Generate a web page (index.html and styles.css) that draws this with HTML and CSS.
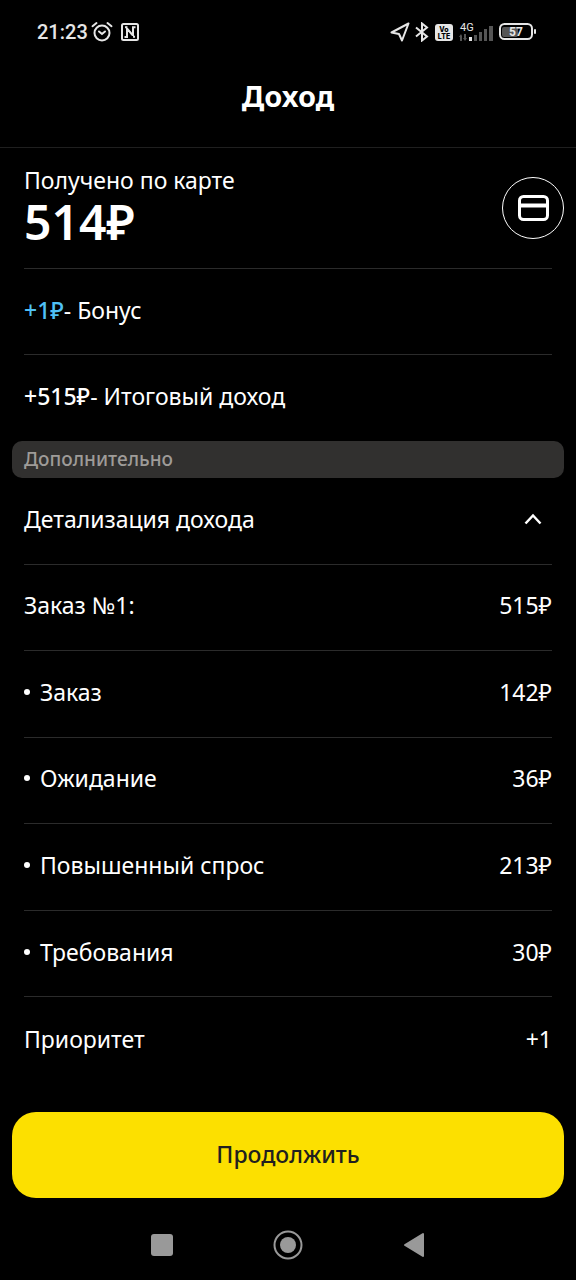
FILE: index.html
```html
<!DOCTYPE html>
<html lang="ru">
<head>
<meta charset="utf-8">
<meta name="viewport" content="width=device-width, initial-scale=1">
<title>Доход</title>
<link rel="stylesheet" href="styles.css">
</head>
<body>
<div class="screen">
  <div class="status">
    <div class="status-group">
      <time class="clock">21:23</time>
      <svg width="22" height="22" viewBox="0 0 22 22" fill="none" stroke="#e6e6e6" stroke-width="2" stroke-linecap="round"><circle cx="11" cy="12" r="7.500"/><path d="M1.500 5.200 5.500 2M20.500 5.200 16.500 2M8 10.500l3 2.500 3-2.500"/></svg>
      <svg class="nfc" width="20" height="20" viewBox="0 0 20 20" fill="none" stroke="#e6e6e6" stroke-width="2"><rect x="2" y="2" width="16" height="16" rx="1.500"/><path d="M4.500 15H7V6.500l5.500 6.500M5 5.300h2.500M15.500 5.300H13V14M15 14.700h-2"/></svg>
    </div>
    <div class="status-group status-right">
      <svg width="20" height="20" viewBox="0 0 20 20" fill="none" stroke="#e6e6e6" stroke-width="2" stroke-linejoin="round"><path d="M18.500 1.500 1.500 10.500l7.500 1.500 3 6.500z"/></svg>
      <svg width="14" height="20" viewBox="0 0 14 20" fill="none" stroke="#e6e6e6" stroke-width="2"><path d="M1 5.500 12 14.500 7 18.500V1.500l5 4L1 14.500"/></svg>
      <svg width="19" height="17" viewBox="0 0 19 17"><rect x="1" width="18" height="17" rx="3" fill="#e6e6e6"/><text class="volte-text" x="10" y="8" text-anchor="middle">Vo</text><text class="volte-text" x="10" y="15" text-anchor="middle">LTE</text></svg>
      <svg width="36" height="20" viewBox="0 0 36 20"><text class="net-text" x="2" y="9">4G</text><g fill="#555"><path d="M1 15l2-3 1 2v5H2v-4zM5 16h1v-4h2v4h1l-2 3z"/><rect x="16" y="13" width="3" height="6"/><rect x="21" y="10" width="3" height="9"/><rect x="26" y="7" width="3" height="12"/><rect x="31" y="4" width="4" height="15"/></g><rect x="11" y="15" width="3" height="4" fill="#e6e6e6"/></svg>
      <svg width="38" height="18" viewBox="0 0 38 18"><rect x="3" y="4" width="16" height="10" rx="2" fill="#555"/><rect x="1" y="1" width="32" height="15" rx="4.500" fill="none" stroke="#e6e6e6" stroke-width="2"/><rect x="35" y="6" width="2" height="5" rx="1" fill="#e6e6e6"/><text class="battery-text" x="17" y="13" text-anchor="middle">57</text></svg>
    </div>
  </div>

  <header class="header"><h1 class="title">Доход</h1></header>

  <main class="content">
    <section>
      <div class="received">
        <div>
          <p class="received-label">Получено по карте</p>
          <p class="received-sum">514₽</p>
        </div>
        <button class="card-button" type="button" aria-label="Карта">
          <svg width="32" height="26" viewBox="0 0 32 26"><rect x="2.500" y="1.500" width="28" height="23" rx="4" fill="none" stroke="#fff" stroke-width="3"/><path d="M2 10.500h29" stroke="#fff" stroke-width="4"/></svg>
        </button>
      </div>
      <p class="row line"><span><span class="bonus">+1₽</span>- Бонус</span></p>
      <p class="row"><span><span class="total">+515₽</span>- Итоговый доход</span></p>
    </section>

    <h2 class="extra">Дополнительно</h2>

    <section class="details">
      <button class="row line toggle" type="button" aria-expanded="true">
        <span>Детализация дохода</span>
        <svg class="chevron" width="18" height="12" viewBox="0 0 18 12" fill="none" stroke="#fff" stroke-width="2.500"><path d="M1.500 10.500 9 2.500l7.500 8"/></svg>
      </button>
      <div class="row line"><span>Заказ №1:</span><span>515₽</span></div>
      <div class="row line"><span class="item">Заказ</span><span>142₽</span></div>
      <div class="row line"><span class="item">Ожидание</span><span>36₽</span></div>
      <div class="row line"><span class="item">Повышенный спрос</span><span>213₽</span></div>
      <div class="row line"><span class="item">Требования</span><span>30₽</span></div>
      <div class="row"><span>Приоритет</span><span>+1</span></div>
    </section>
  </main>

  <button class="continue" type="button">Продолжить</button>

  <nav class="nav">
    <button class="nav-button" type="button" aria-label="Недавние"><svg width="22" height="22" viewBox="0 0 22 22"><rect width="22" height="22" rx="3" fill="#999"/></svg></button>
    <button class="nav-button" type="button" aria-label="Домой"><svg width="30" height="30" viewBox="0 0 30 30"><circle cx="15" cy="15" r="13.500" fill="none" stroke="#999" stroke-width="2"/><circle cx="15" cy="15" r="8" fill="#999"/></svg></button>
    <button class="nav-button" type="button" aria-label="Назад"><svg width="22" height="26" viewBox="0 0 22 26"><path d="M20 2v22L2 13z" fill="#999" stroke="#999" stroke-width="2" stroke-linejoin="round"/></svg></button>
  </nav>
</div>
</body>
</html>
```
FILE: styles.css
```css
* {
  box-sizing: border-box;
}

body,
h1,
h2,
p {
  margin: 0;
}

body {
  background: #000;
  color: #fff;
  font: 23px/32px "Noto Sans", "Open Sans", sans-serif;
}

button {
  padding: 0;
  border: 0;
  background: none;
  color: inherit;
  font: inherit;
}

svg {
  display: block;
  flex: none;
}

.screen {
  display: flex;
  flex-direction: column;
  min-height: 100vh;
}

.status {
  display: flex;
  justify-content: space-between;
  align-items: center;
  height: 64px;
  padding: 0 39px 0 37px;
}

.status-group {
  display: flex;
  align-items: center;
  gap: 3px;
}

.status-right {
  gap: 5px;
}

.clock {
  color: #e6e6e6;
  font: 500 20px/24px Roboto, sans-serif;
}

.nfc {
  margin-left: 4px;
}

.volte-text {
  font: 800 7px Inter, sans-serif;
}

.net-text {
  fill: #e6e6e6;
  font: 11px Roboto, sans-serif;
}

.battery-text {
  fill: #e6e6e6;
  font: 700 12px Roboto, sans-serif;
}

.header {
  display: flex;
  justify-content: center;
  height: 84px;
  padding-top: 12px;
  border-bottom: 1px solid #1f1f1f;
}

.title {
  font-size: 29px;
  font-weight: 700;
  line-height: 40px;
}

.content {
  flex: 1;
  display: flex;
  flex-direction: column;
  padding: 0 12px;
}

.received {
  display: flex;
  justify-content: space-between;
  height: 121px;
  margin-left: 12px;
  padding-top: 16px;
  position: relative;
}

.received::after {
  content: "";
  position: absolute;
  right: 12px;
  bottom: 0;
  left: 0;
  border-bottom: 1px solid #2b2b2b;
}

.received-sum {
  font-size: 48px;
  font-weight: 600;
  line-height: 52px;
}

.card-button {
  display: grid;
  place-items: center;
  width: 62px;
  height: 62px;
  margin-top: 13px;
  border: 1px solid #fff;
  border-radius: 50%;
}

.row {
  display: flex;
  justify-content: space-between;
  align-items: center;
  min-height: 86px;
  margin: 0 12px;
  padding-bottom: 4px;
}

.line {
  border-bottom: 1px solid #2b2b2b;
}

.bonus,
.total {
  font-weight: 500;
}

.bonus {
  color: #4fc0f5;
}

.extra {
  padding: 0 12px;
  border-radius: 10px;
  background: #31302f;
  color: #9e9b98;
  font-size: 19px;
  font-weight: 500;
  line-height: 37px;
}

.details {
  flex: 1;
  display: grid;
  grid-auto-rows: 1fr;
}

.toggle {
  text-align: left;
}

.chevron {
  margin-right: 10px;
}

.item {
  display: flex;
  align-items: center;
  gap: 10px;
}

.item::before {
  content: "";
  width: 6px;
  height: 6px;
  border-radius: 50%;
  background: #fff;
}

.continue {
  height: 86px;
  margin: 28px 12px 0;
  padding-bottom: 2px;
  border-radius: 24px;
  background: #fce000;
  color: #21201f;
  font-weight: 500;
}

.nav {
  display: flex;
  justify-content: center;
  align-items: center;
  gap: 80px;
  height: 82px;
  padding-top: 12px;
}

.nav-button {
  display: grid;
  place-items: center;
  width: 46px;
  height: 46px;
}
```
